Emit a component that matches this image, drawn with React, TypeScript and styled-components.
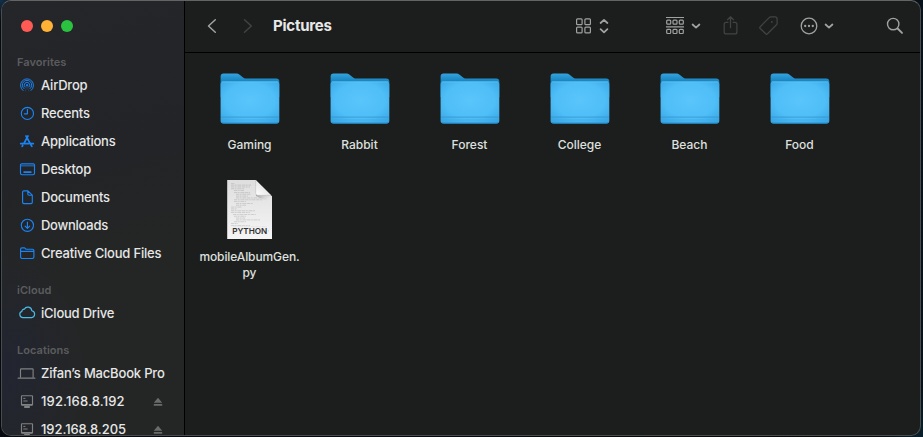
import React from "react";
import styled, { createGlobalStyle } from "styled-components";

const GlobalStyle = createGlobalStyle`
  * { box-sizing: border-box; }
  body {
    margin: 0;
    width: 923px;
    height: 437px;
    overflow: hidden;
    background:
      radial-gradient(circle 22px at 0 0, #12304a, transparent),
      radial-gradient(circle 50px at 923px 437px, #08202c, transparent),
      linear-gradient(90deg, #060a10 0, #050709 900px, #07131b 923px);
    font-family: Inter, "Liberation Sans", sans-serif;
    -webkit-font-smoothing: antialiased;
  }
  svg { display: block; }
`;

const Window = styled.div`
  display: flex;
  width: 920px;
  height: 436px;
  margin-left: 1px;
  border: 1px solid #4a4c4c;
  border-top-color: #626564;
  border-radius: 10px;
  overflow: hidden;
  background: #1c1e1d;
`;

const Sidebar = styled.aside`
  flex: none;
  width: 183px;
  border-right: 1px solid #000;
  background:
    radial-gradient(ellipse 90px 130px at 0 370px, rgba(34, 37, 52, 0.85), transparent),
    linear-gradient(165deg, #25262a 0%, #232427 38%, #242625 62%, #242625 100%);
`;

const Lights = styled.div`
  display: flex;
  gap: 8px;
  padding: 19px 0 0 19px;
  height: 52px;
`;

const Light = styled.span<{ $color: string }>`
  width: 12px;
  height: 12px;
  border-radius: 50%;
  background: ${(p) => p.$color};
`;

const Section = styled.section`
  margin-bottom: 14px;
`;

const Heading = styled.h2`
  margin: 0;
  padding-left: 15px;
  font-size: 11px;
  font-weight: 600;
  line-height: 18px;
  letter-spacing: 0.05px;
  color: #5b5c5e;
`;

const Item = styled.div`
  display: flex;
  align-items: center;
  height: 28px;
  padding-left: 15px;
`;

const ItemIcon = styled.span<{ $color: string }>`
  flex: none;
  width: 24px;
  color: ${(p) => p.$color};
`;

const ItemLabel = styled.span<{ $spacing: number }>`
  flex: 1;
  font-size: 13px;
  font-weight: 500;
  line-height: 16px;
  letter-spacing: ${(p) => p.$spacing}px;
  white-space: nowrap;
  color: #e6e7e7;
`;

const Eject = styled.span`
  margin-right: 21px;
  padding-top: 1px;
  color: #6a6c6b;
`;

const Main = styled.main`
  flex: 1;
  min-width: 0;
`;

const Toolbar = styled.header`
  display: flex;
  align-items: center;
  height: 52px;
  padding: 0 16px 1px 22px;
  border-bottom: 1px solid #000;
`;

const Tool = styled.span<{ $width: number; $dim?: boolean }>`
  flex: none;
  width: ${(p) => p.$width}px;
  color: ${(p) => (p.$dim ? "#414342" : "#a0a2a1")};
`;

const Title = styled.h1`
  flex: 1;
  margin: 0;
  font-size: 15px;
  font-weight: 700;
  line-height: 20px;
  letter-spacing: -0.22px;
  color: #e8e8e8;
`;

const Files = styled.div`
  display: grid;
  grid-template-columns: repeat(6, 110px);
  grid-auto-rows: 112px;
  padding: 14px 0 0 10px;
`;

const File = styled.figure`
  display: flex;
  flex-direction: column;
  align-items: center;
  margin: 0;
`;

const FileName = styled.figcaption<{ $spacing: number }>`
  margin: 6px 1px 0 0;
  font-size: 12px;
  font-weight: 500;
  line-height: 16px;
  letter-spacing: ${(p) => p.$spacing}px;
  text-align: center;
  white-space: pre;
  color: #dfe0df;
`;

type Glyph = React.ReactNode;

const Icon = ({ children }: { children: Glyph }) => (
  <svg width="20" height="18" viewBox="0 0 20 18" fill="none" stroke="currentColor" strokeWidth="1.15" strokeLinecap="round" strokeLinejoin="round">
    {children}
  </svg>
);

const glyphs: Record<string, Glyph> = {
  airdrop: (
    <g strokeWidth="1">
      <path d="M6 14.5A6.5 6.5 0 1 1 14 14.5" />
      <path d="M6.9 12.6A4.7 4.7 0 1 1 13.1 12.6" />
      <path d="M8 11.1A2.8 2.8 0 1 1 12 11.1" />
      <path d="M8.3 15.2 10 9.8l1.7 5.4" strokeWidth="0.8" opacity="0.3" />
      <circle cx="10" cy="9.2" r="0.7" fill="currentColor" />
    </g>
  ),
  recents: (
    <>
      <circle cx="10.4" cy="9.4" r="6.1" />
      <path d="M10.4 5.4v4.4H7.3" />
    </>
  ),
  applications: (
    <g strokeWidth="1.7">
      <path d="M9 4 14.8 14.4M11 4 6.8 11.6M3.7 11.6h8.1M14 11.6h2.3M5.7 13.5l-.5.9" />
    </g>
  ),
  desktop: (
    <>
      <rect x="3.5" y="3.7" width="14" height="11" rx="1.4" />
      <path d="M4 5.4h13" strokeWidth="2" opacity="0.55" />
      <path d="M6.5 12.2h8" strokeWidth="1.8" strokeLinecap="butt" />
    </>
  ),
  documents: (
    <path d="M6.9 2.8h4l4.4 4.3v7.2q0 1.3-1.3 1.3H6.9q-1.3 0-1.3-1.3V4.1q0-1.3 1.3-1.3ZM10.8 3v3q0 1.2 1.2 1.2h3" />
  ),
  downloads: (
    <>
      <circle cx="10.4" cy="9.3" r="6.1" />
      <path d="M10.4 6v6.2M8.1 10.1l2.3 2.3 2.3-2.3" />
    </>
  ),
  folder: (
    <path d="M3.6 13.1V5.3q0-1.4 1.4-1.4h2.6l1.5 1.3h6.4q1.4 0 1.4 1.4v6.5q0 1.4-1.4 1.4H5q-1.4 0-1.4-1.4ZM3.6 7.4h13.3" />
  ),
  cloud: (
    <path d="M5.8 13.6a3.2 3.2 0 0 1-.9-6.2 2.2 2.2 0 0 1 2.4-2.2 4 4 0 0 1 7.5 1.5 3.5 3.5 0 0 1-.2 6.9Z" />
  ),
  laptop: (
    <>
      <path d="M3.5 13.2V5.5q0-.7.7-.7h11.2q.7 0 .7.7v7.7" />
      <path d="M1.2 14.2h16.6" strokeWidth="1.3" />
    </>
  ),
  server: (
    <>
      <rect x="4.5" y="3.7" width="11" height="9.4" rx="0.5" />
      <path d="M6.7 6.4h1.3M6.7 9h3.5" strokeWidth="1" />
      <path d="M4.6 12.6h10.8" strokeWidth="1.4" />
      <path d="M7.2 15h5.6" strokeWidth="2.2" strokeLinecap="butt" />
    </>
  ),
};

const BLUE = "#1a84f5";
const GRAY = "#808282";

interface Place {
  label: string;
  icon: string;
  color: string;
  spacing: number;
  eject?: boolean;
}

const sections: { title: string; places: Place[] }[] = [
  {
    title: "Favorites",
    places: [
      { label: "AirDrop", icon: "airdrop", color: BLUE, spacing: -0.2 },
      { label: "Recents", icon: "recents", color: BLUE, spacing: -0.2 },
      { label: "Applications", icon: "applications", color: BLUE, spacing: -0.23 },
      { label: "Desktop", icon: "desktop", color: BLUE, spacing: -0.2 },
      { label: "Documents", icon: "documents", color: BLUE, spacing: -0.23 },
      { label: "Downloads", icon: "downloads", color: BLUE, spacing: -0.26 },
      { label: "Creative Cloud Files", icon: "folder", color: BLUE, spacing: -0.2 },
    ],
  },
  {
    title: "iCloud",
    places: [{ label: "iCloud Drive", icon: "cloud", color: "#4bbce8", spacing: -0.23 }],
  },
  {
    title: "Locations",
    places: [
      { label: "Zifan’s MacBook Pro", icon: "laptop", color: GRAY, spacing: -0.18 },
      { label: "192.168.8.192", icon: "server", color: GRAY, spacing: 0.15, eject: true },
      { label: "192.168.8.205", icon: "server", color: GRAY, spacing: -0.06, eject: true },
    ],
  },
];

const EjectIcon = () => (
  <svg width="10" height="10" viewBox="0 0 10 10" fill="currentColor">
    <path d="M5 .8 9.2 5.8H.8ZM.8 7h8.4v1.8H.8Z" />
  </svg>
);

const Chevron = ({ forward }: { forward?: boolean }) => (
  <svg width="10" height="16" viewBox="0 0 10 16" fill="none" stroke="currentColor" strokeWidth="1.5" strokeLinecap="round" strokeLinejoin="round">
    <path d={forward ? "M1.5 1.8 8.3 8 1.5 14.2" : "M8.3 1.8 1.5 8l6.8 6.2"} />
  </svg>
);

const DownCaret = () => (
  <svg width="10" height="8" viewBox="0 0 10 8" fill="none" stroke="currentColor" strokeWidth="1.8" strokeLinecap="round" strokeLinejoin="round">
    <path d="M1.6 2.5 5 5.6l3.4-3.1" />
  </svg>
);

const GridIcon = () => (
  <svg width="17" height="16" viewBox="0 0 17 16" fill="none" stroke="currentColor" strokeWidth="1.2">
    {[0.9, 9.2].map((y) =>
      [1.6, 9.9].map((x) => <rect key={`${x}-${y}`} x={x} y={y} width="5.5" height="5.7" rx="0.9" />)
    )}
  </svg>
);

const UpDown = () => (
  <svg width="10" height="16" viewBox="0 0 10 16" fill="none" stroke="currentColor" strokeWidth="1.8" strokeLinecap="round" strokeLinejoin="round">
    <path d="M1.6 5 5 1.9 8.4 5M1.6 11.2 5 14.3l3.4-3.1" />
  </svg>
);

const GroupIcon = () => (
  <svg width="20" height="20" viewBox="0 0 20 20" fill="none" stroke="currentColor" strokeWidth="1.2">
    <path d="M1 1.5h18M1 10.8h18" />
    {[4.1, 13.4].map((y) =>
      [1.7, 8, 14.3].map((x) => <rect key={`${x}-${y}`} x={x} y={y} width="4" height="4.1" rx="0.9" />)
    )}
  </svg>
);

const ShareIcon = () => (
  <svg width="16" height="20" viewBox="0 0 16 20" fill="none" stroke="currentColor" strokeWidth="1.25" strokeLinecap="round" strokeLinejoin="round">
    <path d="M5 6.3H3.2q-2 0-2 2v7.6q0 2 2 2h8.7q2 0 2-2V8.3q0-2-2-2h-1.8M7.5 11.7V.9M4.5 3.7 7.5.8l3 2.9" />
  </svg>
);

const TagIcon = () => (
  <svg width="20" height="20" viewBox="0 0 20 20" fill="none" stroke="currentColor" strokeWidth="1.25" strokeLinejoin="round">
    <path d="M1 11 10.2 1.6q.7-.7 1.6-.7h4.2q2.1 0 2.1 2.1v4.4q0 .8-.6 1.4l-9 9q-.9.9-1.8 0L1 12.3q-.7-.7 0-1.3Z" />
    <circle cx="12.9" cy="6" r="0.9" fill="currentColor" stroke="none" />
  </svg>
);

const MoreIcon = () => (
  <svg width="18" height="18" viewBox="0 0 18 18" fill="none" stroke="currentColor" strokeWidth="1.3">
    <circle cx="9" cy="9" r="7.8" />
    {[5.2, 9, 12.8].map((x) => (
      <circle key={x} cx={x} cy="9" r="1.15" fill="currentColor" stroke="none" />
    ))}
  </svg>
);

const SearchIcon = () => (
  <svg width="18" height="18" viewBox="0 0 18 18" fill="none" stroke="currentColor" strokeLinecap="round">
    <circle cx="7.2" cy="7.1" r="5.7" strokeWidth="1.4" />
    <path d="m11.6 11.5 4.4 4.4" strokeWidth="1.9" />
  </svg>
);

const FolderArt = () => (
  <svg width="64" height="64" viewBox="0 0 64 64">
    <defs>
      <linearGradient id="folder-back" x1="0" y1="0" x2="0" y2="1">
        <stop offset="0" stopColor="#35a3de" />
        <stop offset="0.3" stopColor="#1a86c2" />
      </linearGradient>
      <radialGradient id="folder-front" cx="0.5" cy="0.45" r="0.7">
        <stop offset="0" stopColor="#59c5fb" />
        <stop offset="0.6" stopColor="#50bef7" />
        <stop offset="1" stopColor="#38a6e4" />
      </radialGradient>
    </defs>
    <path d="M2.6 9.5q0-3 3-3h12.8q1.8 0 3.2 1.2l3.5 2.8q1 .9 2.4.9h30.8q3 0 3 3V30H2.6Z" fill="url(#folder-back)" />
    <path d="M2.6 17q0-2.4 2.4-2.4h53.9q2.4 0 2.4 2.4v36.8q0 2.6-2.6 2.6H5.2q-2.6 0-2.6-2.6Z" fill="url(#folder-front)" />
    <path d="M4 14.9h56" stroke="#63c8f5" strokeWidth="0.7" />
    <path d="M3 50.1h58" stroke="#2f96d2" strokeWidth="0.8" />
    <path d="M3 53h58" stroke="#38a5e0" strokeWidth="0.5" />
    <path d="M3.4 55q.6 1.1 2 1.1h53.2q1.4 0 2-1.1" fill="none" stroke="#208bc8" strokeWidth="1" />
  </svg>
);

const codeLines: [number, number][] = [
  [13, 4], [13, 20], [13, 19], [13, 13], [16, 10], [16, 16], [18, 15], [18, 12], [18, 26], [16, 29],
  [16, 12], [18, 17], [18, 10], [13, 11], [13, 6], [13, 24], [13, 19], [15, 23], [16, 12], [18, 9],
  [18, 24], [16, 12], [13, 7], [13, 19], [15, 34], [13, 22], [13, 38],
];

const PythonArt = () => (
  <svg width="64" height="64" viewBox="0 0 64 64">
    <defs>
      <linearGradient id="page" x1="0" y1="0" x2="0" y2="1">
        <stop offset="0" stopColor="#dedede" />
        <stop offset="1" stopColor="#f5f5f5" />
      </linearGradient>
      <linearGradient id="fold" x1="0" y1="1" x2="0.6" y2="0.4">
        <stop offset="0" stopColor="#ffffff" />
        <stop offset="1" stopColor="#e4e4e4" />
      </linearGradient>
      <linearGradient id="fold-shade" x1="0" y1="0" x2="1" y2="1">
        <stop offset="0.3" stopColor="#8d8d8d" stopOpacity="0.7" />
        <stop offset="0.8" stopColor="#bcbcbc" stopOpacity="0" />
      </linearGradient>
    </defs>
    <path d="M9.2 1h28.5L54 17.3V60H9.2Z" fill="url(#page)" />
    {codeLines.map(([x, width], index) => (
      <path key={index} d={`M${x} ${4.3 + index * 1.83}h${width}`} stroke="#888" strokeWidth="0.6" strokeDasharray="3 .6 2 .8 4 .7" opacity="0.5" />
    ))}
    <path d="M38 7 54 17.3v7L38 17Z" fill="url(#fold-shade)" />
    <path d="M37.7 1V14.3q0 2 2 2H53Z" fill="url(#fold)" />
    <path d="M37.7 1V14.3q0 2 2 2H53" fill="none" stroke="#b5b5b5" strokeWidth="0.5" />
    <rect x="13" y="48" width="37" height="8.5" fill="#f2f2f2" opacity="0.85" />
    <text x="14.2" y="55" textLength="35" lengthAdjust="spacing" fontFamily="Inter, sans-serif" fontSize="8.2" fontWeight="600" fill="#303030">
      PYTHON
    </text>
  </svg>
);

const files = [
  { name: "Gaming", folder: true, spacing: 0 },
  { name: "Rabbit", folder: true, spacing: 0 },
  { name: "Forest", folder: true, spacing: 0 },
  { name: "College", folder: true, spacing: -0.05 },
  { name: "Beach", folder: true, spacing: 0 },
  { name: "Food", folder: true, spacing: 0 },
  { name: "mobileAlbumGen.\npy", folder: false, spacing: -0.1 },
];

export default function App() {
  return (
    <>
      <GlobalStyle />
      <Window>
        <Sidebar>
          <Lights>
            <Light $color="#ff5b54" />
            <Light $color="#ffb236" />
            <Light $color="#2bc240" />
          </Lights>
          {sections.map((section) => (
            <Section key={section.title}>
              <Heading>{section.title}</Heading>
              {section.places.map((place) => (
                <Item key={place.label}>
                  <ItemIcon $color={place.color}>
                    <Icon>{glyphs[place.icon]}</Icon>
                  </ItemIcon>
                  <ItemLabel $spacing={place.spacing}>{place.label}</ItemLabel>
                  {place.eject && (
                    <Eject>
                      <EjectIcon />
                    </Eject>
                  )}
                </Item>
              ))}
            </Section>
          ))}
        </Sidebar>
        <Main>
          <Toolbar>
            <Tool $width={36}><Chevron /></Tool>
            <Tool $width={30} $dim><Chevron forward /></Tool>
            <Title>Pictures</Title>
            <Tool $width={24}><GridIcon /></Tool>
            <Tool $width={66}><UpDown /></Tool>
            <Tool $width={26}><GroupIcon /></Tool>
            <Tool $width={32}><DownCaret /></Tool>
            <Tool $width={36} $dim><ShareIcon /></Tool>
            <Tool $width={41} $dim><TagIcon /></Tool>
            <Tool $width={24}><MoreIcon /></Tool>
            <Tool $width={62}><DownCaret /></Tool>
            <Tool $width={18}><SearchIcon /></Tool>
          </Toolbar>
          <Files>
            {files.map((file) => (
              <File key={file.name}>
                {file.folder ? <FolderArt /> : <PythonArt />}
                <FileName $spacing={file.spacing}>{file.name}</FileName>
              </File>
            ))}
          </Files>
        </Main>
      </Window>
    </>
  );
}
